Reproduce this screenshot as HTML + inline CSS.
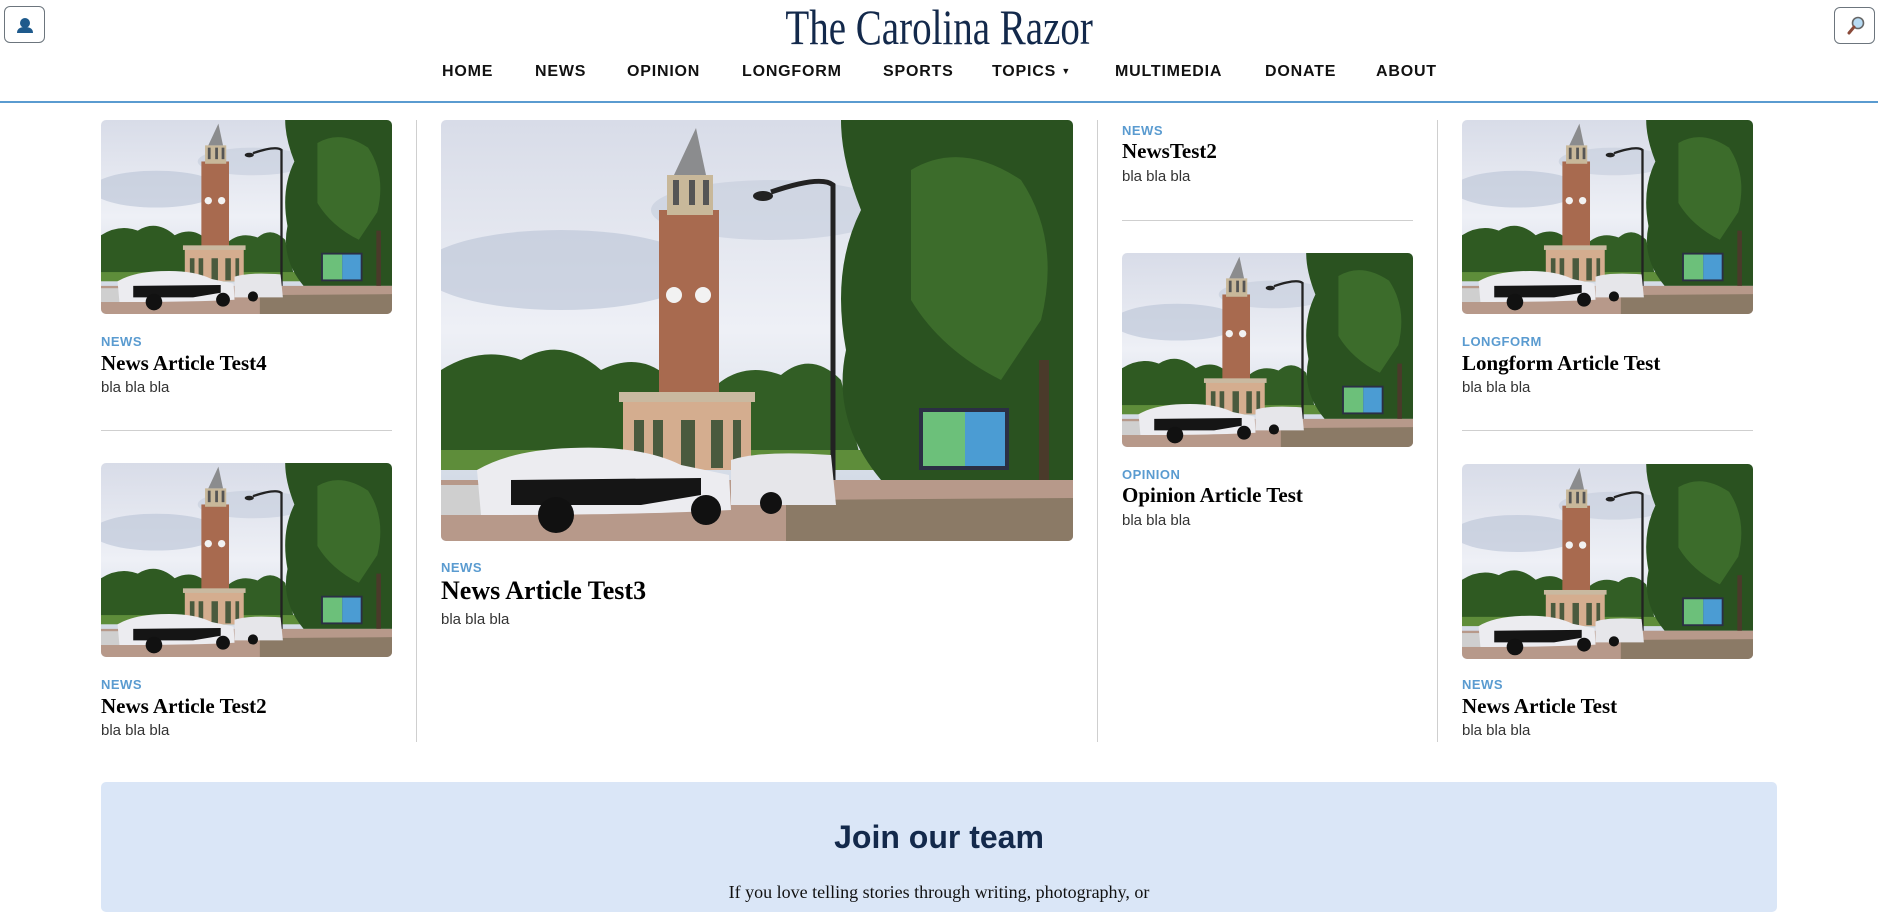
<!DOCTYPE html>
<html><head><meta charset="utf-8">
<style>
*{margin:0;padding:0;box-sizing:border-box}
body{width:1878px;height:892px;overflow:hidden;background:#fff;position:relative;font-family:"Liberation Sans",sans-serif}
.a{position:absolute}
.btn{position:absolute;border:1px solid #6c757d;border-radius:6px;width:41px;height:37px;background:#fff}
.title{position:absolute;left:0;width:1878px;top:-2px;text-align:center;font-family:"Liberation Serif",serif;font-size:50px;color:#13294b;}
.title span{display:inline-block;transform:scaleX(0.78);letter-spacing:0px}
.nav{position:absolute;top:63px;font-weight:bold;font-size:16px;letter-spacing:.8px;color:#111}
.line{position:absolute;left:0;top:101px;width:1878px;height:2px;background:#5a9bd0}
.img{position:absolute;border-radius:5px;overflow:hidden}
.img svg{display:block;width:100%;height:100%}
.lab{position:absolute;font-size:13px;font-weight:bold;color:#5a9bd0;letter-spacing:.5px}
.h{position:absolute;font-family:"Liberation Serif",serif;font-weight:bold;font-size:21px;color:#000}
.b{position:absolute;font-size:15px;color:#333}
.hr{position:absolute;height:1px;background:#cfcfcf}
.vr{position:absolute;width:1px;background:#cfcfcf;top:120px;height:622px}
</style></head><body>
<svg width="0" height="0" style="position:absolute">
<defs>
<linearGradient id="sky" x1="0" y1="0" x2="0" y2="1"><stop offset="0" stop-color="#d8dce8"/><stop offset=".5" stop-color="#eef0f6"/><stop offset="1" stop-color="#c9d2e0"/></linearGradient>
<symbol id="scene" viewBox="0 0 632 421" preserveAspectRatio="none">
<rect width="632" height="421" fill="url(#sky)"/>
<ellipse cx="120" cy="150" rx="140" ry="40" fill="#b9c3d6" opacity=".6"/>
<ellipse cx="330" cy="90" rx="120" ry="30" fill="#c5cddc" opacity=".6"/>
<path d="M0 250 Q40 225 80 240 Q120 215 160 250 Q200 230 230 260 L230 340 L0 340Z" fill="#2f5a22"/>
<path d="M270 270 Q300 240 340 255 Q370 230 400 260 L420 340 L270 340Z" fill="#325e25"/>
<rect x="0" y="330" width="632" height="20" fill="#5e8d3a"/>
<rect x="218" y="90" width="60" height="190" fill="#a86a4f"/>
<rect x="226" y="55" width="46" height="40" fill="#c8b89a"/>
<rect x="232" y="60" width="6" height="25" fill="#555"/><rect x="248" y="60" width="6" height="25" fill="#555"/><rect x="262" y="60" width="6" height="25" fill="#555"/>
<path d="M233 55 L255 8 L265 55Z" fill="#8b8c8e"/>
<circle cx="233" cy="175" r="8" fill="#f2f2f2"/><circle cx="262" cy="175" r="8" fill="#f2f2f2"/>
<rect x="182" y="280" width="128" height="70" fill="#d4ad8f"/>
<rect x="178" y="272" width="136" height="10" fill="#c9b9a0"/>
<g fill="#4a5a3e"><rect x="193" y="300" width="10" height="48"/><rect x="212" y="300" width="10" height="48"/><rect x="240" y="300" width="14" height="48"/><rect x="270" y="300" width="12" height="48"/><rect x="292" y="300" width="8" height="48"/></g>
<path d="M400 0 L632 0 L632 360 L440 360 Q390 300 405 230 Q390 150 420 90 Q400 40 400 0Z" fill="#2a5220"/>
<path d="M470 50 Q520 20 580 60 Q620 120 600 200 L560 260 Q500 230 470 180Z" fill="#3c6c2b"/>
<rect x="598" y="240" width="10" height="125" fill="#4a3a2a"/>
<path d="M392 390 L392 65 Q380 55 330 72" stroke="#222" stroke-width="5" fill="none"/>
<ellipse cx="322" cy="76" rx="10" ry="5" fill="#222"/>
<rect x="478" y="288" width="90" height="62" fill="#2b2f44"/>
<rect x="482" y="292" width="42" height="54" fill="#6cc07a"/>
<rect x="524" y="292" width="40" height="54" fill="#4b9cd3"/>
<rect x="0" y="360" width="632" height="61" fill="#b7998a"/>
<rect x="0" y="365" width="60" height="30" fill="#cfcfcf"/>
<path d="M345 380 L632 378 L632 421 L345 421Z" fill="#8b7a66"/>
<path d="M290 340 Q320 330 390 335 L395 385 L290 385Z" fill="#e6e6ea"/>
<path d="M36 350 Q70 330 130 328 Q200 325 240 345 L288 355 L290 390 Q200 395 40 395Z" fill="#ececf0"/>
<path d="M70 360 L260 358 L260 375 L200 385 L70 385Z" fill="#151515"/>
<circle cx="115" cy="395" r="18" fill="#111"/><circle cx="265" cy="390" r="15" fill="#111"/>
<circle cx="330" cy="383" r="11" fill="#111"/>
</symbol>
</defs></svg>

<div class="btn" style="left:4px;top:6px"><svg width="41" height="37" viewBox="0 0 41 37"><circle cx="20" cy="16" r="5" fill="#1e5a8c"/><path d="M12 26 Q12 20 20 20 Q28 20 28 26Z" fill="#1e5a8c"/></svg></div>
<div class="btn" style="left:1834px;top:7px"><svg width="41" height="37" viewBox="0 0 41 37"><circle cx="23" cy="15" r="5.5" fill="#b8dcf5" stroke="#666" stroke-width="1.6"/><line x1="19" y1="19" x2="14" y2="25" stroke="#8a4a3a" stroke-width="3" stroke-linecap="round"/></svg></div>

<div class="title"><span>The Carolina Razor</span></div>
<div class="nav" style="left:442px">HOME</div>
<div class="nav" style="left:535px">NEWS</div>
<div class="nav" style="left:627px">OPINION</div>
<div class="nav" style="left:742px">LONGFORM</div>
<div class="nav" style="left:883px">SPORTS</div>
<div class="nav" style="left:992px">TOPICS <span style="font-size:9px;vertical-align:2px">▼</span></div>
<div class="nav" style="left:1115px">MULTIMEDIA</div>
<div class="nav" style="left:1265px">DONATE</div>
<div class="nav" style="left:1376px">ABOUT</div>
<div class="line"></div>

<!-- col1 -->
<div class="img" style="left:101px;top:120px;width:291px;height:194px"><svg><use href="#scene"/></svg></div>
<div class="lab" style="left:101px;top:334px">NEWS</div>
<div class="h" style="left:101px;top:351px">News Article Test4</div>
<div class="b" style="left:101px;top:379px">bla bla bla</div>
<div class="hr" style="left:101px;top:430px;width:291px"></div>
<div class="img" style="left:101px;top:463px;width:291px;height:194px"><svg><use href="#scene"/></svg></div>
<div class="lab" style="left:101px;top:677px">NEWS</div>
<div class="h" style="left:101px;top:694px">News Article Test2</div>
<div class="b" style="left:101px;top:722px">bla bla bla</div>
<div class="vr" style="left:416px"></div>

<!-- col2 -->
<div class="img" style="left:441px;top:120px;width:632px;height:421px"><svg><use href="#scene"/></svg></div>
<div class="lab" style="left:441px;top:560px">NEWS</div>
<div class="h" style="left:441px;top:576px;font-size:26px">News Article Test3</div>
<div class="b" style="left:441px;top:611px">bla bla bla</div>
<div class="vr" style="left:1097px"></div>

<!-- col3 -->
<div class="lab" style="left:1122px;top:123px">NEWS</div>
<div class="h" style="left:1122px;top:139px">NewsTest2</div>
<div class="b" style="left:1122px;top:168px">bla bla bla</div>
<div class="hr" style="left:1122px;top:220px;width:291px"></div>
<div class="img" style="left:1122px;top:253px;width:291px;height:194px"><svg><use href="#scene"/></svg></div>
<div class="lab" style="left:1122px;top:467px">OPINION</div>
<div class="h" style="left:1122px;top:483px">Opinion Article Test</div>
<div class="b" style="left:1122px;top:512px">bla bla bla</div>
<div class="vr" style="left:1437px"></div>

<!-- col4 -->
<div class="img" style="left:1462px;top:120px;width:291px;height:194px"><svg><use href="#scene"/></svg></div>
<div class="lab" style="left:1462px;top:334px">LONGFORM</div>
<div class="h" style="left:1462px;top:351px">Longform Article Test</div>
<div class="b" style="left:1462px;top:379px">bla bla bla</div>
<div class="hr" style="left:1462px;top:430px;width:291px"></div>
<div class="img" style="left:1462px;top:464px;width:291px;height:195px"><svg><use href="#scene"/></svg></div>
<div class="lab" style="left:1462px;top:677px">NEWS</div>
<div class="h" style="left:1462px;top:694px">News Article Test</div>
<div class="b" style="left:1462px;top:722px">bla bla bla</div>

<div class="a" style="left:101px;top:782px;width:1676px;height:130px;background:#dae6f7;border-radius:5px">
<div style="position:absolute;left:0;width:100%;top:37px;text-align:center;font-size:32px;font-weight:bold;color:#13294b">Join our team</div>
<div style="position:absolute;left:0;width:100%;top:100px;text-align:center;font-family:'Liberation Serif',serif;font-size:18px;color:#111">If you love telling stories through writing, photography, or</div>
</div>
</body></html>
